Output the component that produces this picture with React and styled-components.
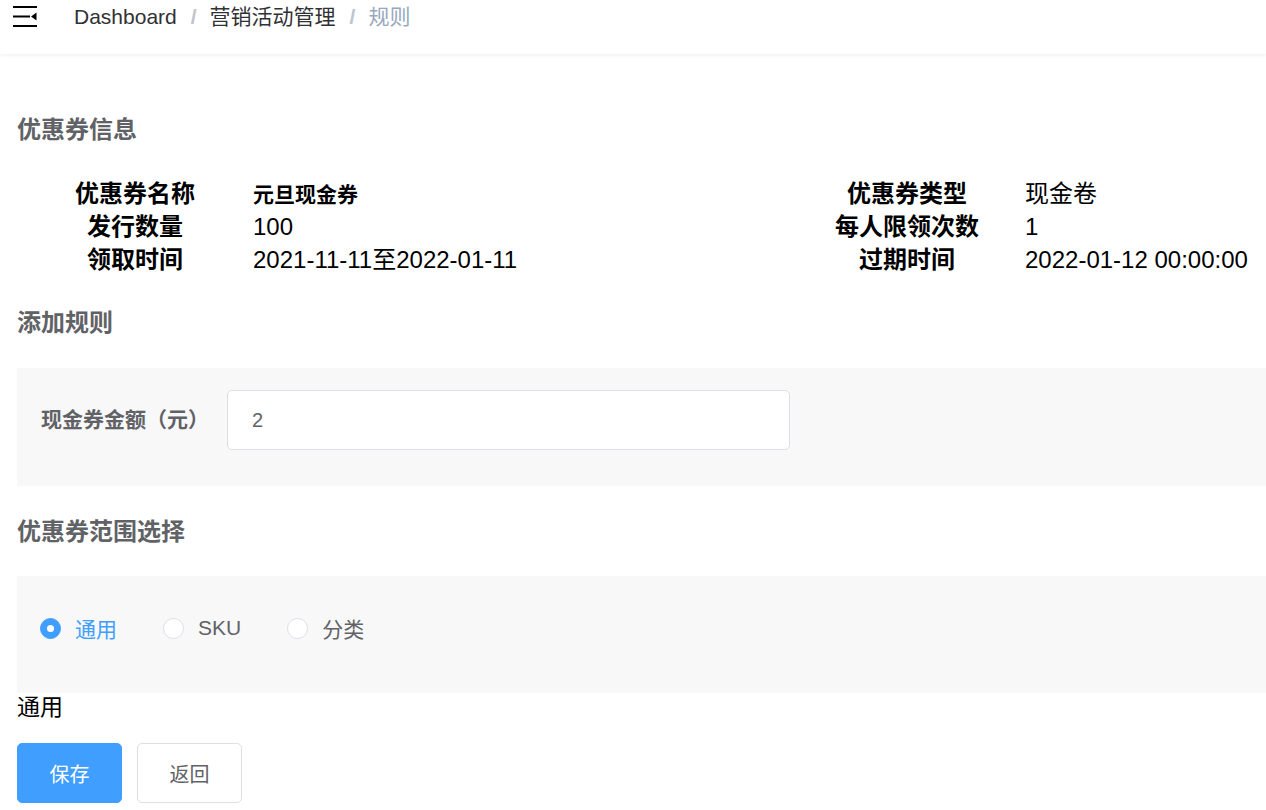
import styled, { createGlobalStyle } from "styled-components";

const GlobalStyle = createGlobalStyle`
	* {
		box-sizing: border-box;
	}
	body {
		margin: 0;
		background: #fff;
		font-family: "Liberation Sans", "Noto Sans CJK SC", sans-serif;
		color: #303133;
		overflow: hidden;
	}
`;

const infoRows = [
	["优惠券名称", "元旦现金券", "优惠券类型", "现金卷", true],
	["发行数量", "100", "每人限领次数", "1"],
	["领取时间", "2021-11-11至2022-01-11", "过期时间", "2022-01-12 00:00:00"],
];

const scopes = ["通用", "SKU", "分类"];

const Hamburger = () => (
	<svg width="25" height="21" viewBox="0 0 25 21">
		<rect x="0" y="0" width="24" height="2" fill="#000" />
		<rect x="0" y="9.5" width="17" height="2" fill="#000" />
		<polygon points="18,10.5 23.5,6.5 23.5,14.5" fill="#000" />
		<rect x="0" y="19" width="24" height="2" fill="#000" />
	</svg>
);

const App = () => {
	const selected = "通用";
	return (
		<>
			<GlobalStyle />
			<Navbar>
				<Toggle>
					<Hamburger />
				</Toggle>
				<Breadcrumb>
					<Crumb>Dashboard</Crumb>
					<Sep>/</Sep>
					<Crumb>营销活动管理</Crumb>
					<Sep>/</Sep>
					<Crumb $current>规则</Crumb>
				</Breadcrumb>
			</Navbar>
			<Main>
				<SectionTitle $top={59}>优惠券信息</SectionTitle>
				<InfoGrid>
					{infoRows.map(([l1, v1, l2, v2, strong]) => (
						<InfoRow key={l1}>
							<InfoLabel>{l1}</InfoLabel>
							<InfoValue $strong={strong}>{v1}</InfoValue>
							<InfoLabel>{l2}</InfoLabel>
							<InfoValue>{v2}</InfoValue>
						</InfoRow>
					))}
				</InfoGrid>
				<SectionTitle $top={30}>添加规则</SectionTitle>
				<FormPanel>
					<FormLabel>现金券金额（元）</FormLabel>
					<Input defaultValue="2" />
				</FormPanel>
				<SectionTitle $top={29}>优惠券范围选择</SectionTitle>
				<RadioPanel>
					{scopes.map(s => (
						<Radio key={s}>
							<RadioDot $checked={s === selected} />
							<RadioText $checked={s === selected}>{s}</RadioText>
						</Radio>
					))}
				</RadioPanel>
				<Selected>{selected}</Selected>
				<Actions>
					<Button $primary>保存</Button>
					<Button>返回</Button>
				</Actions>
			</Main>
		</>
	);
};

export default App;

const Navbar = styled.div`
	height: 54px;
	display: flex;
	align-items: flex-start;
	background: #fff;
	box-shadow: 0 1px 4px rgba(0, 21, 41, 0.08);
`;

const Toggle = styled.div`
	width: 74px;
	padding: 6px 0 0 13px;
	line-height: 0;
`;

const Breadcrumb = styled.div`
	display: flex;
	font-size: 21px;
	line-height: 34px;
`;

const Crumb = styled.span`
	color: ${({ $current }) => ($current ? "#97a8be" : "#303133")};
`;

const Sep = styled.span`
	margin: 0 13px 0 14px;
	color: #c0c4cc;
	font-weight: bold;
`;

const Main = styled.div`
	padding-left: 17px;
`;

const SectionTitle = styled.div`
	margin-top: ${({ $top }) => $top}px;
	font-size: 24px;
	line-height: 34px;
	font-weight: bold;
	color: #606266;
`;

const InfoGrid = styled.div`
	margin-top: 30px;
`;

const InfoRow = styled.div`
	display: grid;
	grid-template-columns: 236px 536px 236px auto;
	align-items: baseline;
	height: 33px;
	line-height: 33px;
`;

const InfoLabel = styled.div`
	text-align: center;
	font-size: 24px;
	font-weight: bold;
	color: #000;
`;

const InfoValue = styled.div`
	font-size: ${({ $strong }) => ($strong ? "21px" : "24px")};
	font-weight: ${({ $strong }) => ($strong ? "bold" : "normal")};
	color: #000;
	white-space: nowrap;
`;

const FormPanel = styled.div`
	margin-top: 28px;
	height: 118px;
	padding: 22px 24px 0;
	display: flex;
	align-items: flex-start;
	background: #f8f8f9;
`;

const FormLabel = styled.label`
	width: 186px;
	line-height: 60px;
	font-size: 21px;
	font-weight: bold;
	color: #606266;
`;

const Input = styled.input`
	width: 563px;
	height: 60px;
	padding: 0 24px;
	border: 1px solid #dcdfe6;
	border-radius: 5px;
	background: #fff;
	font-family: inherit;
	font-size: 20px;
	color: #606266;
	outline: none;
`;

const RadioPanel = styled.div`
	margin-top: 27px;
	height: 117px;
	padding: 37px 23px 0;
	display: flex;
	align-items: flex-start;
	gap: 46px;
	background: #f8f8f9;
`;

const Radio = styled.label`
	display: flex;
	align-items: center;
	height: 30px;
	cursor: pointer;
`;

const RadioDot = styled.span`
	width: 21px;
	height: 21px;
	border-radius: 50%;
	border: 1px solid ${({ $checked }) => ($checked ? "#409eff" : "#dcdfe6")};
	background: ${({ $checked }) => ($checked ? "#409eff" : "#fff")};
	display: flex;
	align-items: center;
	justify-content: center;

	&::after {
		content: "";
		width: 7px;
		height: 7px;
		border-radius: 50%;
		background: #fff;
		display: ${({ $checked }) => ($checked ? "block" : "none")};
	}
`;

const RadioText = styled.span`
	margin-left: 14px;
	font-size: 21px;
	color: ${({ $checked }) => ($checked ? "#409eff" : "#606266")};
`;

const Selected = styled.div`
	font-size: 23px;
	line-height: 28px;
	color: #000;
`;

const Actions = styled.div`
	margin-top: 22px;
	display: flex;
	gap: 15px;
`;

const Button = styled.button`
	width: 105px;
	height: 60px;
	border-radius: 5px;
	border: 1px solid ${({ $primary }) => ($primary ? "#409eff" : "#dcdfe6")};
	background: ${({ $primary }) => ($primary ? "#409eff" : "#fff")};
	color: ${({ $primary }) => ($primary ? "#fff" : "#606266")};
	font-family: inherit;
	font-size: 20px;
	cursor: pointer;
`;
